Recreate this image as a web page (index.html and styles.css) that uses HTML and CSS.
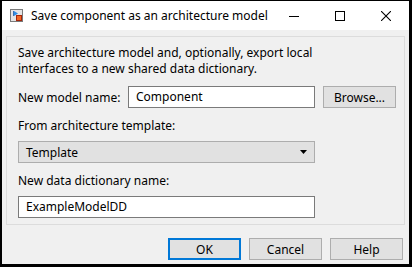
FILE: index.html
```
<!DOCTYPE html>
<html lang="en">
<head>
    <meta charset="UTF-8">
    <title>Save component as an architecture model</title>
    <link rel="stylesheet" href="styles.css">
</head>
<body>

    <div class="window">
        <!-- title bar -->
        <div class="titlebar">
            <svg class="app-icon" width="13" height="13" viewBox="0 0 13 13">
                <rect x="0.5" y="0.5" width="12" height="12" fill="#e4e4e4" stroke="#7a7a7a"/>
                <line x1="3.5" y1="2" x2="3.5" y2="7" stroke="#3a6fb0"/>
                <polygon points="4,2 8,4.5 4,7" fill="#2f8de4"/>
                <rect x="6.5" y="6.5" width="5" height="5" fill="#f26522" stroke="#a4260a"/>
            </svg>
            <span class="title">Save component as an architecture model</span>
            <div class="caption-buttons">
                <span class="cap">
                    <svg width="10" height="10" viewBox="0 0 10 10"><line x1="0" y1="5.5" x2="10" y2="5.5" stroke="#000"/></svg>
                </span>
                <span class="cap">
                    <svg width="10" height="10" viewBox="0 0 10 10"><rect x="0.5" y="0.5" width="9" height="9" fill="none" stroke="#000"/></svg>
                </span>
                <span class="cap">
                    <svg width="10" height="10" viewBox="0 0 10 10"><path d="M0 0 L10 10 M10 0 L0 10" stroke="#000" stroke-width="1.1"/></svg>
                </span>
            </div>
        </div>

        <!-- client area -->
        <div class="client">
            <div class="panel">
                <p class="intro">Save architecture model and, optionally, export local<br>interfaces to a new shared data dictionary.</p>

                <div class="name-row">
                    <span class="label">New model name:</span>
                    <div class="field name-field">Component</div>
                    <div class="btn browse">Browse...</div>
                </div>

                <div class="caption">From architecture template:</div>
                <div class="select">
                    <span>Template</span>
                    <svg width="7" height="4" viewBox="0 0 7 4"><polygon points="0,0 7,0 3.5,4" fill="#000"/></svg>
                </div>

                <div class="caption">New data dictionary name:</div>
                <div class="field wide-field">ExampleModelDD</div>
            </div>

            <div class="actions">
                <div class="btn default">OK</div>
                <div class="btn">Cancel</div>
                <div class="btn">Help</div>
            </div>
        </div>
    </div>

</body>
</html>
```

FILE: styles.css
```
/* --- base --- */
:root {
    --face: #f0f0f0;
    --btn-face: #e1e1e1;
    --btn-border: #adadad;
    --field-border: #7a7a7a;
    --panel-border: #dcdcdc;
    --accent: #0078d7;
}

* {
    box-sizing: border-box;
}

body {
    margin: 0;
    font-family: 'Noto Sans', 'Liberation Sans', sans-serif;
    font-size: 12px;
    color: #000;
    background: #fff;
}

/* --- window frame --- */
.window {
    width: 412px;
    height: 267px;
    display: flex;
    flex-direction: column;
    border-style: solid;
    border-color: #000;
    border-width: 1px 3px 3px 2px;
    background: var(--face);
}

.titlebar {
    height: 29px;
    display: flex;
    align-items: center;
    background: #fff;
    padding-left: 8px;
}

.app-icon {
    flex: none;
    margin-top: -1px;
}

.title {
    margin-left: 8px;
    font-size: 12px;
    flex: 1;
}

.caption-buttons {
    display: flex;
    height: 100%;
}

.cap {
    width: 46px;
    height: 100%;
    display: flex;
    align-items: center;
    justify-content: center;
}

/* --- client area --- */
.client {
    flex: 1;
    display: flex;
    flex-direction: column;
    padding: 6px 4px 4px 4px;
}

.panel {
    border: 1px solid var(--panel-border);
    padding: 8px 8px 9px 11px;
    height: 189px;
}

.intro {
    margin: 0;
    line-height: 16px;
}

.name-row {
    display: flex;
    align-items: center;
    margin-top: 9px;
}

.name-row > * {
    flex: none;
}

.label {
    width: 110px;
}

.field {
    height: 22px;
    border: 1px solid var(--field-border);
    background: #fff;
    padding: 0 7px;
    line-height: 20px;
}

.name-field {
    width: 187px;
}

.wide-field {
    width: 297px;
}

.caption {
    margin-top: 10px;
    line-height: 16px;
}

.select {
    width: 297px;
    height: 22px;
    margin-top: 7px;
    border: 1px solid var(--btn-border);
    background: var(--btn-face);
    padding: 0 7px;
    display: flex;
    align-items: center;
    justify-content: space-between;
}

.caption + .field {
    margin-top: 7px;
}

/* --- buttons --- */
.btn {
    height: 22px;
    width: 73px;
    border: 1px solid var(--btn-border);
    background: var(--btn-face);
    display: flex;
    align-items: center;
    justify-content: center;
}

.browse {
    margin-left: 8px;
}

.btn.default {
    border: 2px solid var(--accent);
}

.actions {
    display: flex;
    justify-content: flex-end;
    gap: 8px;
    margin-top: auto;
    padding-right: 2px;
}
```
